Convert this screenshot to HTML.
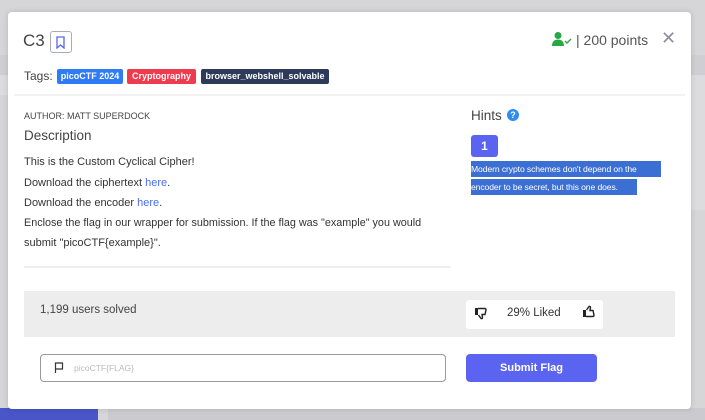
<!DOCTYPE html>
<html><head><meta charset="utf-8"><style>
*{margin:0;padding:0;box-sizing:border-box}
body{width:705px;height:420px;overflow:hidden;background:#d6d6d9;font-family:"Liberation Sans",sans-serif;position:relative;color:#333}
.a{position:absolute}
.modal{left:8px;top:12px;width:683px;height:397px;background:#fff;border-radius:4px;box-shadow:0 0 6px rgba(0,0,0,.15)}
.tag{position:absolute;top:69px;height:15px;color:#fff;font-weight:bold;font-size:9px;line-height:15px;border-radius:2px;white-space:nowrap;text-align:center}
.t{position:absolute;font-size:11px;color:#333;white-space:nowrap}
a{color:#4a6cf7;text-decoration:none}
.hl{background:#3c6fd4;color:#fff;font-size:8.6px;line-height:16px;white-space:nowrap;overflow:hidden;letter-spacing:-0.1px}
</style></head><body>
<div class="a" style="left:0;top:55px;width:705px;height:22px;background:#cfcfd3"></div>
<div class="a" style="left:0;top:75px;width:705px;height:20px;background:#dcdcdf"></div>
<div class="a" style="left:691px;top:95px;width:14px;height:115px;background:#dcdcdf"></div>
<div class="a" style="left:0;top:408px;width:98px;height:12px;background:#4a56c8"></div>
<div class="a" style="left:108px;top:408px;width:600px;height:12px;background:#cbcbcf"></div>
<div class="a modal"></div>
<div class="a" style="left:23px;top:31px;font-size:17px;color:#444">C3</div>
<div class="a" style="left:50px;top:31px;width:22px;height:22px;border:1px solid #aab;border-radius:3px"></div>
<svg class="a" style="left:55px;top:36px" width="11" height="13" viewBox="0 0 11 13"><path d="M2 1h7v11l-3.5-3L2 12z" fill="none" stroke="#5865f2" stroke-width="1.3"/></svg>
<svg class="a" style="left:552px;top:31px" width="20" height="16" viewBox="0 0 20 16"><circle cx="6" cy="4.5" r="3.5" fill="#28a745"/><path d="M0 15c0-5 3-6.5 6-6.5s6 1.5 6 6.5z" fill="#28a745"/><path d="M13 10l2 2 4-4" fill="none" stroke="#28a745" stroke-width="1.4"/></svg>
<div class="a" style="left:576px;top:32px;font-size:14px;color:#555">| 200 points</div>
<div class="a" style="left:661px;top:28px;font-size:18px;color:#8a90a0">✕</div>
<div class="a" style="left:24px;top:69px;font-size:12px;color:#444">Tags:</div>
<div class="tag" style="left:57px;width:66px;background:#2f7bf5">picoCTF 2024</div>
<div class="tag" style="left:127px;width:69px;background:#ef3b4e">Cryptography</div>
<div class="tag" style="left:201px;width:128px;background:#2d3a5a">browser_webshell_solvable</div>
<div class="a" style="left:14px;top:94px;width:671px;height:2px;background:#f2f2f2"></div>
<div class="a" style="left:24px;top:111px;font-size:9px;color:#444">AUTHOR: MATT SUPERDOCK</div>
<div class="a" style="left:24px;top:128px;font-size:13.5px;color:#444">Description</div>
<div class="t" style="left:24px;top:156px">This is the Custom Cyclical Cipher!</div>
<div class="t" style="left:24px;top:177px">Download the ciphertext <a>here</a>.</div>
<div class="t" style="left:24px;top:197px">Download the encoder <a>here</a>.</div>
<div class="t" style="left:24px;top:217px;font-size:10.8px">Enclose the flag in our wrapper for submission. If the flag was "example" you would</div>
<div class="t" style="left:24px;top:237px">submit "picoCTF{example}".</div>
<div class="a" style="left:24px;top:266px;width:427px;height:2px;background:#eee"></div>
<div class="a" style="left:471px;top:108px;font-size:13.5px;color:#444">Hints</div>
<div class="a" style="left:507px;top:109px;width:12px;height:12px;border-radius:50%;background:#2f8cf0;color:#fff;font-size:9px;font-weight:bold;text-align:center;line-height:12px">?</div>
<div class="a" style="left:471px;top:135px;width:27px;height:22px;border-radius:3px;background:#5b64f0;color:#fff;font-weight:bold;font-size:12px;text-align:center;line-height:22px">1</div>
<div class="a hl" style="left:471px;top:161px;width:190px;height:16px">Modern crypto schemes don't depend on the</div>
<div class="a hl" style="left:471px;top:179px;width:166px;height:16px">encoder to be secret, but this one does.</div>
<div class="a" style="left:24px;top:291px;width:651px;height:46px;background:#ededed"></div>
<div class="a" style="left:40px;top:304px;font-size:11.5px;color:#444">1,199 users solved</div>
<div class="a" style="left:466px;top:300px;width:137px;height:29px;background:#fff;border-radius:3px"></div>
<svg class="a" style="left:474px;top:307px" width="14" height="13" viewBox="0 0 14 13"><path d="M1 1h3v7H1z" fill="#222"/><path d="M4 1.5h6.5c1 0 1.5.6 1.5 1.4L11 7.5H8l.5 3.2c0 1-1.4 1.3-1.8.4L4.5 8" fill="none" stroke="#222" stroke-width="1.4"/></svg>
<div class="a" style="left:507px;top:307px;font-size:11.5px;color:#333">29% Liked</div>
<svg class="a" style="left:582px;top:305px" width="14" height="13" viewBox="0 0 14 13"><path d="M1 5h3v7H1z" fill="#222"/><path d="M4 11.5h6.5c1 0 1.5-.6 1.5-1.4L11 5.5H8l.5-3.2c0-1-1.4-1.3-1.8-.4L4.5 5" fill="none" stroke="#222" stroke-width="1.4"/></svg>
<div class="a" style="left:40px;top:354px;width:406px;height:28px;border:1px solid #999;border-radius:4px"></div>
<svg class="a" style="left:54px;top:362px" width="10" height="11" viewBox="0 0 10 11"><path d="M1.5 11V1h7v6h-7" fill="none" stroke="#333" stroke-width="1.2"/></svg>
<div class="a" style="left:74px;top:363px;font-size:8.5px;color:#bbb">picoCTF{FLAG}</div>
<div class="a" style="left:466px;top:354px;width:131px;height:28px;background:#5b64f0;border-radius:4px;color:#fff;font-size:11px;font-weight:bold;text-align:center;line-height:28px">Submit Flag</div>
</body></html>
